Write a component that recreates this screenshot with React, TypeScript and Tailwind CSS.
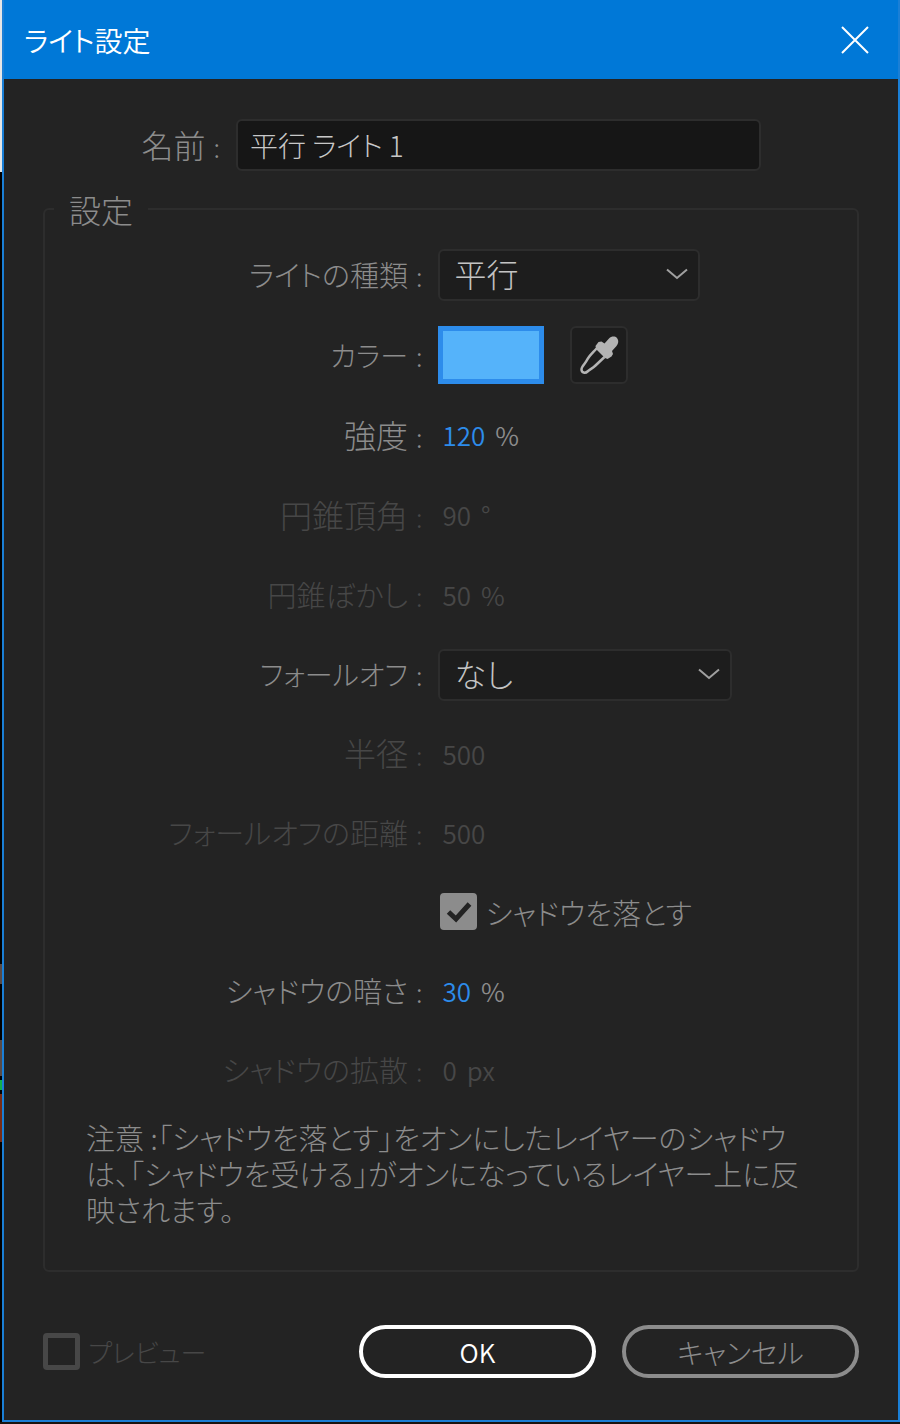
import { useState } from "react";
import type { ReactNode } from "react";

interface RowProps {
    label?: string;
    htmlFor?: string;
    size?: string;
    disabled?: boolean;
    compact?: boolean;
    children: ReactNode;
}

const Colon = () => <span className="ml-2 text-[26px]">:</span>;

const Row = ({ label, htmlFor, size = "text-[32px]", disabled, compact, children }: RowProps) => (
    <div
        className={`grid grid-cols-[377fr_418fr] items-center gap-x-4 ${compact ? "h-[79px]" : "h-20"}`}
    >
        {label ? (
            <label
                htmlFor={htmlFor}
                className={`whitespace-nowrap text-right ${size} ${disabled ? "text-[#474747]" : "text-[#8c8c8c]"}`}
            >
                {label}
                <Colon />
            </label>
        ) : (
            <span />
        )}
        <div className="flex items-center">{children}</div>
    </div>
);

interface ValueProps {
    id: string;
    value: string;
    unit?: string;
    disabled?: boolean;
}

const Value = ({ id, value, unit, disabled }: ValueProps) => (
    <div className="flex items-baseline gap-[10px] pl-1 text-[26px] font-[350]">
        <input
            id={id}
            type="text"
            defaultValue={value}
            disabled={disabled}
            className="field-sizing-content bg-transparent text-[#2d8ceb] outline-none disabled:text-[#474747]"
        />
        {unit && (
            <span className={disabled ? "text-[#474747]" : "text-[#8c8c8c]"}>{unit}</span>
        )}
    </div>
);

interface DropdownProps {
    id: string;
    options: string[];
    className: string;
}

const Dropdown = ({ id, options, className }: DropdownProps) => (
    <div className={`relative ${className}`}>
        <select
            id={id}
            className="h-[52px] w-full appearance-none rounded-md border-2 border-[#2d2d2d] bg-[#1d1d1d] pb-1 pl-[14px] text-[#c4c4c4] outline-none"
        >
            {options.map((option) => (
                <option key={option}>{option}</option>
            ))}
        </select>
        <svg
            viewBox="0 0 22 12"
            className="pointer-events-none absolute right-3 top-[19px] h-3 w-[22px]"
            fill="none"
            stroke="#a0a0a0"
            strokeWidth="2"
        >
            <path d="M1 1.5 L11 10 L21 1.5" />
        </svg>
    </div>
);

const Eyedropper = () => (
    <svg viewBox="0 0 40 40" className="size-10">
        <path
            d="M17.500 13.500 C14 17.500 9.500 21.500 8 25 C6.500 28.500 2.500 31 2.500 34.500 C2.500 38 6.500 38.500 8.500 36.500 C10.500 34.500 13.500 33.500 16.500 30.500 L25.500 22"
            fill="none"
            stroke="#b4b4b4"
            strokeWidth="2.500"
        />
        <path
            d="M16.500 11 L19.500 7 L22.500 6.500 L25.500 8.500 L30 3.500 C32.500 1 36 1 38 3 C40 5.500 39.500 8.500 37.500 11 L33 16 L34 19 L32.500 21.500 L28.500 24 L26 23 L17 14 Z"
            fill="#b4b4b4"
        />
    </svg>
);

const App = () => {
    const [shadow, setShadow] = useState(true);

    return (
        <main className="flex min-h-screen bg-[#1a1410] pb-[2px] font-['Noto_Sans_CJK_JP',sans-serif] text-[32px] leading-9 font-light [font-feature-settings:'palt']">
            {/* sliver of the window behind */}
            <div className="flex w-[2px] shrink-0 flex-col bg-black">
                <span className="h-[172px] bg-[#e6e6e6]" />
                <span className="mt-[792px] h-5 bg-[#5a4a44]" />
                <span className="mt-14 h-9 bg-[#5a4a44]" />
                <span className="mt-1 h-[10px] bg-[#12b04a]" />
                <span className="mt-1 h-12 bg-[#7a2c14]" />
            </div>

            <div className="flex min-w-0 flex-1 flex-col border-2 border-t-0 border-[#1a7fd6] bg-[#232323]">
                <header className="flex h-[79px] items-center justify-between bg-[#0078d7] pl-5 pr-[29px] text-white">
                    <h1 className="text-[28px] font-[350]">ライト設定</h1>
                    <button type="button" aria-label="閉じる">
                        <svg
                            viewBox="0 0 28 28"
                            className="size-7"
                            stroke="white"
                            strokeWidth="2"
                        >
                            <path d="M1 1 L27 27 M27 1 L1 27" />
                        </svg>
                    </button>
                </header>

                <form
                    className="flex flex-1 flex-col px-[39px] pt-10"
                    onSubmit={(e) => e.preventDefault()}
                >
                    <div className="flex items-center gap-4 pr-[98px]">
                        <label
                            htmlFor="name"
                            className="w-[177px] shrink-0 text-right text-[#8c8c8c]"
                        >
                            名前
                            <Colon />
                        </label>
                        <input
                            id="name"
                            type="text"
                            defaultValue="平行 ライト 1"
                            className="h-[52px] min-w-0 flex-1 rounded-md border-2 border-[#2d2d2d] bg-[#161616] px-3 text-[28px] text-[#c8c8c8] outline-none"
                        />
                    </div>

                    <fieldset className="mt-5 min-w-0 rounded-md border-2 border-[#2d2d2d] pb-[43px]">
                        <legend className="ml-[9px] px-[15px] text-[#8c8c8c]">設定</legend>

                        <div className="pt-2">
                            <Row label="ライトの種類" htmlFor="type" size="text-[29px]">
                                <Dropdown
                                    id="type"
                                    options={["平行", "スポット", "ポイント", "アンビエント"]}
                                    className="w-[262px]"
                                />
                            </Row>
                            <Row label="カラー" htmlFor="color" size="text-[28px]">
                                <button
                                    id="color"
                                    type="button"
                                    className="h-[58px] w-[106px] border-[5px] border-[#2d8ceb] bg-[#55b3fa]"
                                />
                                <button
                                    type="button"
                                    aria-label="スポイト"
                                    className="ml-[26px] flex size-[58px] items-center justify-center rounded-md border-2 border-[#2d2d2d] bg-[#1d1d1d]"
                                >
                                    <Eyedropper />
                                </button>
                            </Row>
                            <Row label="強度" htmlFor="intensity">
                                <Value id="intensity" value="120" unit="%" />
                            </Row>
                            <Row label="円錐頂角" htmlFor="cone" disabled>
                                <Value id="cone" value="90" unit="°" disabled />
                            </Row>
                            <Row label="円錐ぼかし" htmlFor="feather" size="text-[29px]" disabled>
                                <Value id="feather" value="50" unit="%" disabled />
                            </Row>
                            <Row label="フォールオフ" htmlFor="falloff" size="text-[28px]" compact>
                                <Dropdown
                                    id="falloff"
                                    options={["なし", "スムーズ", "逆二乗クランプ"]}
                                    className="w-[294px]"
                                />
                            </Row>
                            <Row label="半径" htmlFor="radius" disabled compact>
                                <Value id="radius" value="500" disabled />
                            </Row>
                            <Row
                                label="フォールオフの距離"
                                htmlFor="distance"
                                size="text-[29px]"
                                disabled
                                compact
                            >
                                <Value id="distance" value="500" disabled />
                            </Row>
                            <Row compact>
                                <label className="flex items-center gap-2 pl-[2px] text-[29px] text-[#8c8c8c]">
                                    <span className="grid size-[37px] place-items-center">
                                        <input
                                            type="checkbox"
                                            checked={shadow}
                                            onChange={(e) => setShadow(e.target.checked)}
                                            className="col-start-1 row-start-1 size-[37px] appearance-none rounded-sm border-[5px] border-[#8c8c8c] checked:bg-[#8c8c8c]"
                                        />
                                        {shadow && (
                                            <svg
                                                viewBox="0 0 26 22"
                                                className="pointer-events-none col-start-1 row-start-1 h-[22px] w-[26px]"
                                                fill="none"
                                                stroke="#232323"
                                                strokeWidth="5"
                                            >
                                                <path d="M2.500 11 L10 18 L23.500 3" />
                                            </svg>
                                        )}
                                    </span>
                                    シャドウを落とす
                                </label>
                            </Row>
                            <Row label="シャドウの暗さ" htmlFor="darkness" size="text-[29px]" compact>
                                <Value id="darkness" value="30" unit="%" />
                            </Row>
                            <Row
                                label="シャドウの拡散"
                                htmlFor="diffusion"
                                size="text-[29px]"
                                disabled
                                compact
                            >
                                <Value id="diffusion" value="0" unit="px" disabled />
                            </Row>
                        </div>

                        <p className="mt-[10px] whitespace-nowrap pl-[41px] text-[29px] text-[#8c8c8c]">
                            注意 :「シャドウを落とす」をオンにしたレイヤーのシャドウ
                            <br />
                            は、「シャドウを受ける」がオンになっているレイヤー上に反
                            <br />
                            映されます。
                        </p>
                    </fieldset>

                    <div className="mt-[53px] mb-10 flex items-center">
                        <label className="flex items-center gap-2 text-[26px] text-[#474747]">
                            <input
                                type="checkbox"
                                disabled
                                className="size-[37px] appearance-none rounded-sm border-[5px] border-[#474747]"
                            />
                            プレビュー
                        </label>
                        <div className="ml-auto flex gap-[26px]">
                            <button
                                type="submit"
                                className="h-[53px] w-[237px] rounded-full border-4 border-white text-[26px] font-[350] text-white"
                            >
                                OK
                            </button>
                            <button
                                type="button"
                                className="h-[53px] w-[237px] rounded-full border-4 border-[#8c8c8c] text-[28px] text-[#8c8c8c]"
                            >
                                キャンセル
                            </button>
                        </div>
                    </div>
                </form>
            </div>
        </main>
    );
};

export default App;
